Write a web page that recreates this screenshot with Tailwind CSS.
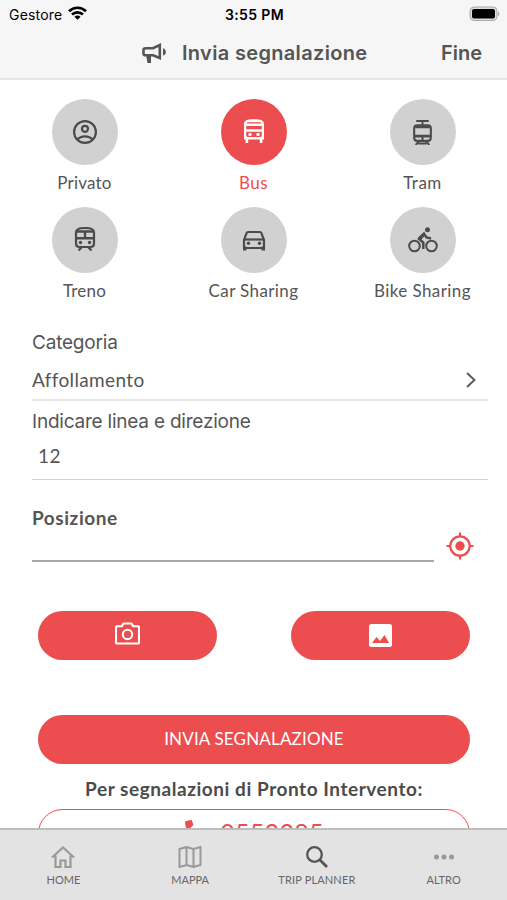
<!DOCTYPE html>
<html lang="it">

<head>
    <meta charset="UTF-8">
    <meta name="viewport" content="width=device-width, initial-scale=1.0">
    <title>Invia segnalazione</title>
    <script src="https://cdn.jsdelivr.net/npm/@tailwindcss/browser@4"></script>
</head>

<body class="bg-white font-[Lato,sans-serif] text-[#555]">
    <div class="h-[900px] w-[507px] flex flex-col overflow-hidden">

        <!-- Header -->
        <header class="h-20 shrink-0 bg-[#f7f6f7] border-b-2 border-[#e6e6e6] font-[Inter,sans-serif]">
            <div class="h-7 grid grid-cols-3 items-center pl-[9px] pr-[7px] text-black">
                <div class="flex items-center gap-[6px]">
                    <span class="text-[14px] tracking-[0.2px]">Gestore</span>
                    <svg class="w-[19px] h-[14px] -mt-[2px]" viewBox="0 0 19 14" fill="none" stroke="#000" stroke-width="2.7">
                        <path d="M1 5.200C5.800.6 13.200.6 18 5.200"/>
                        <path d="M4 8.600c3.200-3 7.800-3 11 0"/>
                        <path d="M9.500 13.800L6.400 10.700c1.800-1.600 4.400-1.600 6.200 0z" fill="#000" stroke="none"/>
                    </svg>
                </div>
                <span class="text-center text-[14px] font-semibold tracking-[0.35px] whitespace-nowrap">3:55 PM</span>
                <svg class="w-[31px] h-4 justify-self-end" viewBox="0 0 31 16">
                    <rect x="1" y="1" width="27" height="13.500" rx="4" fill="#dcdcdc" stroke="#aaa"/>
                    <rect x="3" y="3" width="23" height="9.500" rx="2" fill="#000"/>
                    <path d="M29 5.500c1.800.6 1.800 4 0 4.600z" fill="#aaa"/>
                </svg>
            </div>
            <div class="h-[49px] flex items-center justify-between pl-[142px] pr-[25px] text-[20px] font-semibold">
                <div class="flex items-center gap-[15px]">
                    <svg class="w-[25px] h-[21px] mt-px" viewBox="0 0 25 21" fill="none" stroke="#555" stroke-width="2.600">
                        <path d="M3.500 5.200H11L17.800 2v13L11 12.300H3.500c-1.200 0-2-.7-2-1.800V7c0-1.100.8-1.800 2-1.800z"/>
                        <path d="M4 12h5v8H5.500z" fill="#555" stroke="none"/>
                        <path d="M21 5.200c3.800 1 3.800 6.400 0 7.400z" fill="#555" stroke="none"/>
                    </svg>
                    <span class="whitespace-nowrap tracking-[0.33px]">Invia segnalazione</span>
                </div>
                <span>Fine</span>
            </div>
        </header>

        <main class="h-[748px] shrink-0 overflow-hidden">
            <!-- Transport types -->
            <div class="grid grid-cols-3 pt-[19px] text-[17px] leading-[22px]">
                <div class="h-[108px] flex flex-col items-center gap-[7px]">
                    <div class="size-[66px] rounded-full bg-[#d1d1d1] flex items-center justify-center">
                        <svg class="size-6" viewBox="0 0 24 24" fill="none" stroke="#4b4b4b" stroke-width="2.200">
                            <circle cx="12" cy="12" r="10.900"/>
                            <circle cx="12" cy="8.800" r="3"/>
                            <path d="M4.500 19.500c3.500-4.200 11.500-4.200 15 0"/>
                        </svg>
                    </div>
                    <span class="tracking-[0.2px]">Privato</span>
                </div>
                <div class="h-[108px] flex flex-col items-center gap-[7px]">
                    <div class="size-[66px] rounded-full bg-[#ec4d4f] flex items-center justify-center">
                        <svg class="size-6 -mt-[2px]" viewBox="0 0 24 24" fill="#fff">
                            <path fill-rule="evenodd" d="M2 5C2 1.500 5 .2 12 .2S22 1.500 22 5v15.500H20.400V24H17.800V20.500H6.200V24H3.600V20.500H2zM6 3.200Q5 3.200 4.800 4.500H19.200Q19 3.200 18 3.200zM4.200 7v3.300H19.800V7zM4.200 12.800v3.500q0 1.700 1.700 1.700H18.100q1.700 0 1.700-1.700V12.800z"/>
                            <circle cx="8" cy="15.400" r="1.700"/>
                            <circle cx="16" cy="15.400" r="1.700"/>
                        </svg>
                    </div>
                    <span class="text-[#ec4d4f] tracking-[0.5px]">Bus</span>
                </div>
                <div class="h-[108px] flex flex-col items-center gap-[7px]">
                    <div class="size-[66px] rounded-full bg-[#d1d1d1] flex items-center justify-center">
                        <svg class="size-[25px]" viewBox="0 0 24 24" fill="none" stroke="#4b4b4b" stroke-width="2">
                            <path d="M6 1H18M12 1V4.500" stroke-width="1.800"/>
                            <path d="M7 5H17Q20 5 20 8v9q0 3-3 3H7q-3 0-3-3V8Q4 5 7 5z"/>
                            <path d="M5 6.700H19M4.500 15.500H19.500" stroke-width="2.600"/>
                            <path d="M12 15v4.500M8.500 20.500L5.500 24M15.500 20.500l3 3.500M8 22.500h8"/>
                        </svg>
                    </div>
                    <span class="tracking-[0.5px]">Tram</span>
                </div>
                <div class="h-[108px] flex flex-col items-center gap-[7px]">
                    <div class="size-[66px] rounded-full bg-[#d1d1d1] flex items-center justify-center">
                        <svg class="size-6 -mt-[2px]" viewBox="0 0 24 24" fill="none" stroke="#4b4b4b" stroke-width="2.200">
                            <path d="M3 5.500C3 2 6 1 12 1s9 1 9 4.500v11Q21 20 17.500 20h-11Q3 20 3 16.500z"/>
                            <path d="M3.500 4.500H20.500M3 11.300H21M12 5v6" stroke-width="2.400"/>
                            <path d="M8.500 20.500L5.500 23.500M15.500 20.500l3 3"/>
                            <circle cx="7.500" cy="15.500" r="1.700" fill="#4b4b4b" stroke="none"/>
                            <circle cx="16.500" cy="15.500" r="1.700" fill="#4b4b4b" stroke="none"/>
                        </svg>
                    </div>
                    <span class="tracking-[0.2px]">Treno</span>
                </div>
                <div class="h-[108px] flex flex-col items-center gap-[7px]">
                    <div class="size-[66px] rounded-full bg-[#d1d1d1] flex items-center justify-center">
                        <svg class="size-6" viewBox="0 0 24 24" fill="none" stroke="#4b4b4b" stroke-width="2.200">
                            <path d="M2 20V12L4.700 4.800Q5 4 6 4H18q1 0 1.300.8L22 12v8z" stroke-linejoin="round"/>
                            <path d="M3 11.500H21"/>
                            <path d="M1 18.500h3.500V22.500H1zM19.500 18.500H23V22.500H19.500z" fill="#4b4b4b" stroke="none"/>
                            <circle cx="6.500" cy="15.300" r="1.700" fill="#4b4b4b" stroke="none"/>
                            <circle cx="17.500" cy="15.300" r="1.700" fill="#4b4b4b" stroke="none"/>
                        </svg>
                    </div>
                    <span class="tracking-[0.38px]">Car Sharing</span>
                </div>
                <div class="h-[108px] flex flex-col items-center gap-[7px]">
                    <div class="size-[66px] rounded-full bg-[#d1d1d1] flex items-center justify-center">
                        <svg class="w-[30px] h-[26px]" viewBox="0 0 30 26" fill="none" stroke="#4b4b4b" stroke-width="2">
                            <circle cx="6.500" cy="19" r="5.300"/>
                            <circle cx="23.500" cy="19" r="5.300"/>
                            <circle cx="19.500" cy="2.800" r="2.500" fill="#4b4b4b" stroke="none"/>
                            <path d="M15.300 22v-6.500L11 12l5-5.200 2.500 3.700 4.500 1" stroke-width="2.500"/>
                            <path d="M10 10.500L15.500 5.500l1.500 3-4 4.500z" fill="#4b4b4b" stroke="none"/>
                        </svg>
                    </div>
                    <span class="tracking-[0.4px]">Bike Sharing</span>
                </div>
            </div>

            <!-- Form -->
            <div class="pl-8 pr-[19px] pt-[15px] text-[19px] leading-6">
                <div class="font-[Inter,sans-serif] tracking-[-0.2px] pt-px">Categoria</div>
                <div class="mt-[13px] h-[33px] flex justify-between border-b-2 border-[#e6e6e6]">
                    <span class="tracking-[0.35px]">Affollamento</span>
                    <svg class="w-3 h-[18px] mr-[11px] mt-[3px]" viewBox="0 0 12 18" fill="none" stroke="#555" stroke-width="1.800">
                        <path d="M2 2l7.500 7L2 16"/>
                    </svg>
                </div>
                <div class="mt-[9px] font-[Inter,sans-serif] tracking-[-0.22px]">Indicare linea e direzione</div>
                <div class="mt-[10px] h-9 pl-[6px] border-b border-[#d2d2d2] tracking-[0.4px]">12</div>
                <div class="mt-[26px] font-bold tracking-[0.55px]">Posizione</div>
                <div class="h-[32px] flex justify-between">
                    <div class="w-[402px] border-b-2 border-[#a6a6a6]"></div>
                    <svg class="size-7 mr-[14px] mt-[2px]" viewBox="0 0 28 28" fill="none" stroke="#ec4d4f" stroke-width="2.200">
                        <circle cx="14" cy="14" r="9.700"/>
                        <circle cx="14" cy="14" r="4.700" fill="#ec4d4f" stroke="none"/>
                        <path d="M14 .5v4M14 23.500v4M.5 14h4M23.500 14h4"/>
                    </svg>
                </div>
            </div>

            <!-- Actions -->
            <div class="pl-[38px] pr-[37px] pt-[49px]">
                <div class="flex justify-between">
                    <button class="w-[179px] h-[49px] rounded-full bg-[#ec4d4f] flex items-center justify-center">
                        <svg class="w-[25px] h-[23px] -mt-[5px]" viewBox="0 0 26 24" fill="none" stroke="#fff" stroke-width="2.200" stroke-linejoin="round">
                            <path d="M2 4.500H7L9 1.500h8l2 3h5q1 0 1 1V21.500q0 1-1 1H2q-1 0-1-1V5.500q0-1 1-1z"/>
                            <circle cx="13" cy="13" r="4.900"/>
                        </svg>
                    </button>
                    <button class="w-[179px] h-[49px] rounded-full bg-[#ec4d4f] flex items-center justify-center">
                        <svg class="size-[23px] -mt-[1px]" viewBox="0 0 23 23">
                            <rect width="23" height="23" rx="2.500" fill="#fff"/>
                            <path d="M3 19L7.500 13l3.500 4 4.500-6L20 19z" fill="#ec4d4f"/>
                        </svg>
                    </button>
                </div>
                <button class="mt-[55px] w-full h-[49px] rounded-full bg-[#ec4d4f] text-white text-[17px] tracking-[0.17px] pb-[1px]">INVIA SEGNALAZIONE</button>
                <div class="mt-[13px] text-center text-[19px] leading-6 font-bold tracking-[0.55px] text-[#4b4b4b] whitespace-nowrap">Per segnalazioni di Pronto Intervento:</div>
                <button class="mt-2 w-full h-[49px] rounded-full border border-[#ec4d4f] text-[#ec4d4f] flex justify-center gap-[14px] pt-[9px] text-[25px] leading-[26px]">
                    <svg class="size-[22px]" viewBox="0 0 22 22" fill="#ec4d4f">
                        <path d="M1 2.500L7.500.8 9.500 6 6.700 8.600c1.600 3.200 3.600 5.200 6.700 6.700L16 12.600l5.300 2L20 21C9 21 1 13 1 2.500z"/>
                    </svg>
                    <span class="tracking-[0.3px]">0553285</span>
                </button>
            </div>
        </main>

        <!-- Bottom tabs -->
        <nav class="h-[72px] shrink-0 bg-[#e3e3e3] border-t-2 border-[#bdbdbd] grid grid-cols-4 text-[11px] leading-[14px] text-[#666]">
            <div class="flex flex-col items-center pt-[16px] gap-[5px]">
                <svg class="w-6 h-[22px]" viewBox="0 0 24 22" fill="none" stroke="#999" stroke-width="2.200">
                    <path d="M1 11.500L12 1.500l11 10M4.500 9.500V21H9.500v-6.500h5V21h5V9.500"/>
                </svg>
                <span>HOME</span>
            </div>
            <div class="flex flex-col items-center pt-[16px] gap-[5px]">
                <svg class="w-6 h-[22px]" viewBox="0 0 24 22" fill="none" stroke="#999" stroke-width="2">
                    <path d="M1.500 3L8.500 1l7 2 7-2v18l-7 2-7-2-7 2zM8.500 1v18M15.500 3v18"/>
                </svg>
                <span>MAPPA</span>
            </div>
            <div class="flex flex-col items-center pt-[16px] gap-[5px]">
                <svg class="w-6 h-[22px]" viewBox="0 0 24 22" fill="none" stroke="#555" stroke-width="2.300">
                    <circle cx="9.500" cy="8.500" r="7.300"/>
                    <path d="M14.500 13.500l7.500 7.500" stroke-width="2.800"/>
                </svg>
                <span class="whitespace-nowrap tracking-[0.15px]">TRIP PLANNER</span>
            </div>
            <div class="flex flex-col items-center pt-[16px] gap-[5px]">
                <svg class="w-6 h-[22px]" viewBox="0 0 24 22" fill="#999">
                    <circle cx="4.500" cy="11" r="2.500"/>
                    <circle cx="12" cy="11" r="2.500"/>
                    <circle cx="19.500" cy="11" r="2.500"/>
                </svg>
                <span>ALTRO</span>
            </div>
        </nav>
    </div>
</body>

</html>
